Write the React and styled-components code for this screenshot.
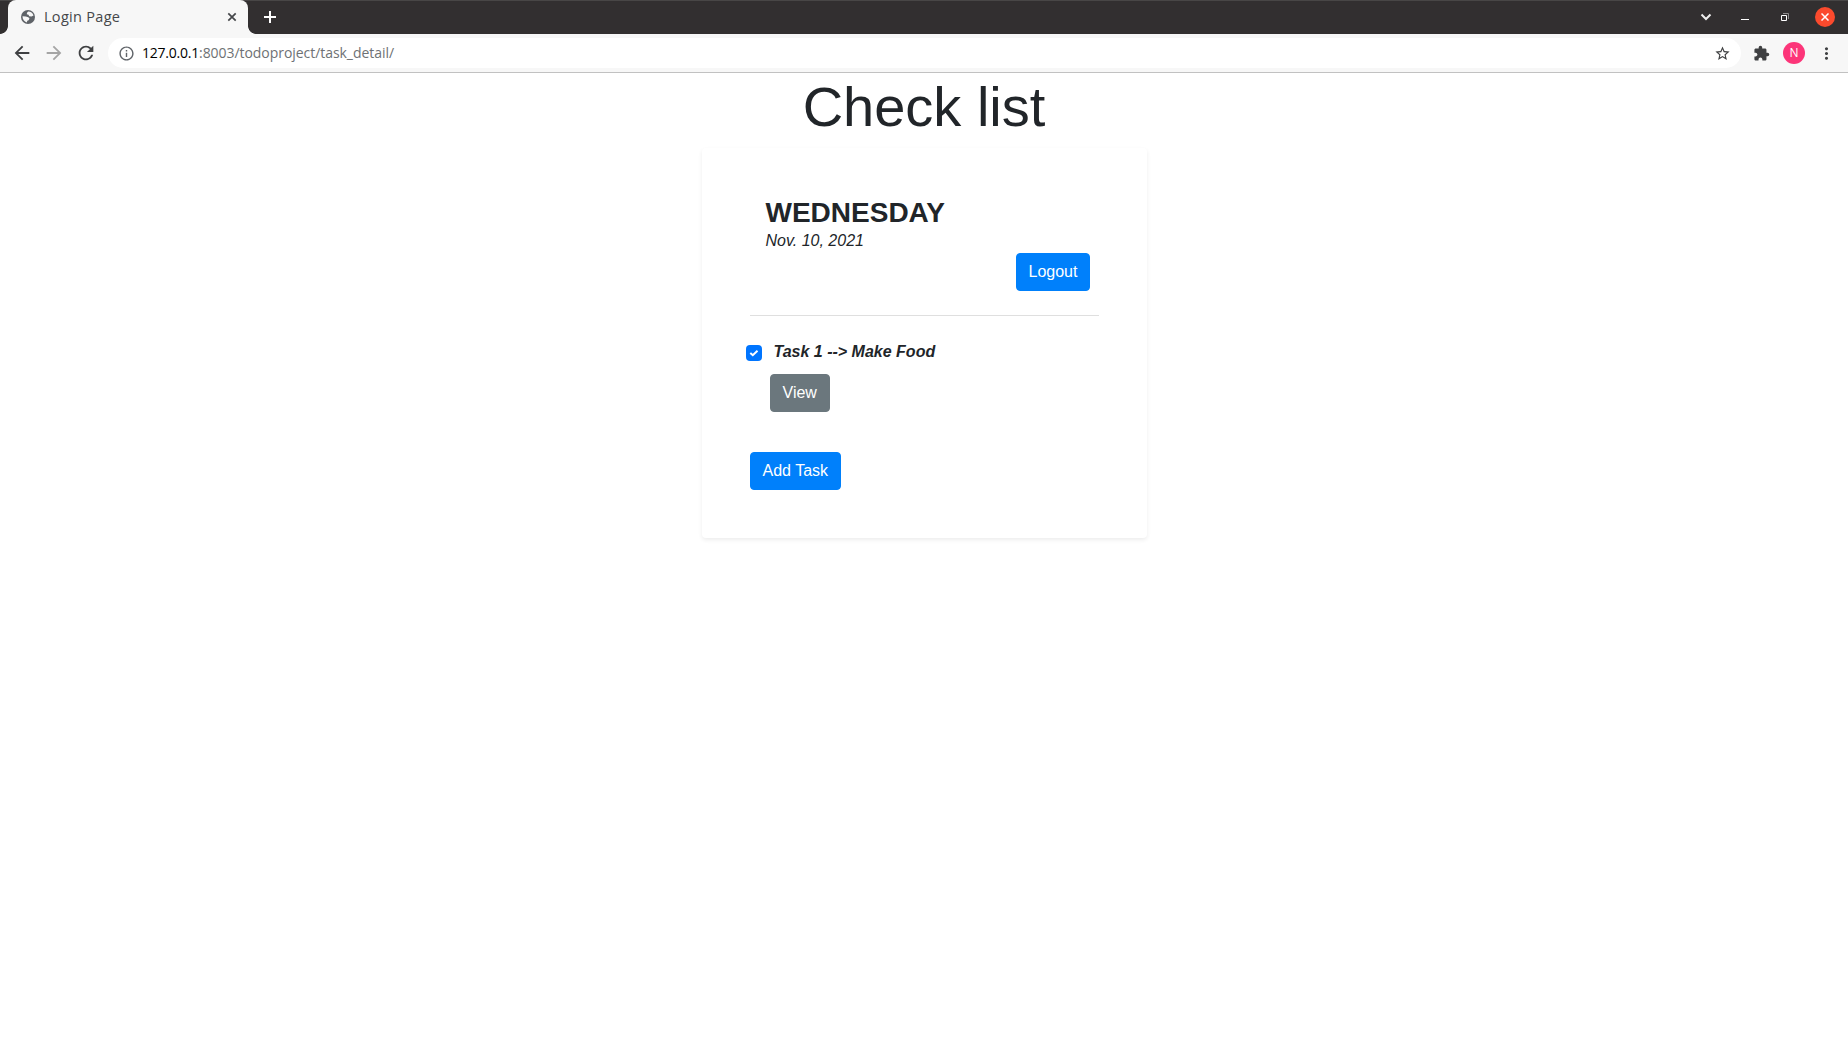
import React from "react";
import styled, { createGlobalStyle, css } from "styled-components";
import {
  MdArrowBack,
  MdArrowForward,
  MdRefresh,
  MdInfoOutline,
  MdStarBorder,
  MdExtension,
  MdMoreVert,
} from "react-icons/md";

const GlobalStyle = createGlobalStyle`
  *, *::before, *::after { box-sizing: border-box; }
  body {
    margin: 0;
    background: #fff;
    color: #212529;
    font: 16px/24px "Liberation Sans", Arial, sans-serif;
  }
  svg { display: block; flex: none; }
`;

const Window = styled.div`
  display: flex;
  flex-direction: column;
  height: 100vh;
  overflow: hidden;
`;

const uiFont = css`
  font-family: "Open Sans", "Noto Sans", sans-serif;
  white-space: nowrap;
`;

const TabStrip = styled.div`
  display: flex;
  height: 34px;
  padding-left: 8px;
  background: #322f30;
  box-shadow: inset 0 1px #484646;
`;

const Tab = styled.div`
  ${uiFont}
  position: relative;
  display: flex;
  align-items: center;
  width: 240px;
  padding: 0 8px 0 13px;
  border-radius: 8px 8px 0 0;
  background: #f7f7f7;
  color: #45474a;
  &::before,
  &::after {
    content: "";
    position: absolute;
    bottom: 0;
    width: 8px;
    height: 8px;
  }
  &::before {
    left: -8px;
    background: radial-gradient(circle at 0 0, transparent 7.5px, #f7f7f7 8.2px);
  }
  &::after {
    right: -8px;
    background: radial-gradient(circle at 100% 0, transparent 7.5px, #f7f7f7 8.2px);
  }
`;

const TabTitle = styled.span`
  flex: 1;
  margin-left: 9px;
  font-size: 14.5px;
  line-height: 20px;
  letter-spacing: 0.3px;
`;

const NewTab = styled.div`
  display: flex;
  align-items: center;
  margin-left: 16px;
`;

const WindowButtons = styled.div`
  display: flex;
  align-items: center;
  margin-left: auto;
  padding-right: 13px;
`;

const WindowButton = styled.div`
  display: grid;
  place-items: center;
  width: ${(p) => p.$w}px;
  height: 20px;
`;

const Close = styled.div`
  display: grid;
  place-items: center;
  width: 20px;
  height: 20px;
  margin-left: 10px;
  border-radius: 50%;
  background: #fb4a2d;
`;

const Toolbar = styled.div`
  display: flex;
  align-items: center;
  height: 39px;
  border-bottom: 1px solid #c1c1c1;
  padding: 0 10px 0 6px;
  background: #f7f7f7;
`;

const ToolButton = styled.div`
  display: grid;
  place-items: center;
  width: ${(p) => p.$w || 32}px;
  height: 30px;
  color: ${(p) => (p.$muted ? "#a5a5a5" : "#3f4042")};
`;

const AddressBar = styled.div`
  ${uiFont}
  display: flex;
  align-items: center;
  flex: 1;
  height: 30px;
  margin: 0 5px 0 6px;
  padding: 0 10px 0 9.5px;
  border-radius: 15px;
  background: #fff;
  color: #5f6368;
`;

const Url = styled.span`
  flex: 1;
  margin-left: 7.5px;
  font-size: 14px;
  line-height: 20px;
  letter-spacing: -0.05px;
  color: #6e7174;
`;

const Host = styled.span`
  color: #000;
  letter-spacing: -0.23px;
`;

const Avatar = styled.div`
  ${uiFont}
  display: grid;
  place-items: center;
  width: 22px;
  height: 22px;
  margin: 0 10px 0 6px;
  border-radius: 50%;
  background: #fc3579;
  color: #fff;
  font-size: 12px;
  line-height: 22px;
`;

const Page = styled.main`
  display: flex;
  flex-direction: column;
  align-items: center;
  flex: 1;
`;

const Title = styled.h1`
  margin: 0 0 8px;
  font-size: 56px;
  font-weight: 300;
  line-height: 67px;
`;

const Card = styled.section`
  width: 445px;
  height: 390px;
  padding: 48px;
  border-radius: 4px;
  background: #fff;
  box-shadow: 0 2px 4px rgba(0, 0, 0, 0.075);
`;

const CardHeader = styled.header`
  display: flex;
  flex-direction: column;
  padding: 0 9px 0 16px;
`;

const Day = styled.h3`
  margin: 0;
  font-size: 28px;
  font-weight: 700;
  line-height: 33px;
`;

const DateText = styled.em`
  line-height: 24px;
`;

const Button = styled.button`
  align-self: ${(p) => p.$align || "flex-start"};
  width: ${(p) => p.$w}px;
  height: 38px;
  padding: 6px 0 6px 12px;
  border: 1px solid ${(p) => p.$color};
  border-radius: 4px;
  background: ${(p) => p.$color};
  color: #fff;
  font: inherit;
  text-align: left;
  white-space: nowrap;
`;

const Rule = styled.hr`
  height: 1px;
  margin: 24px 0;
  border: 0;
  background: #dfdfdf;
`;

const Task = styled.div`
  display: flex;
  align-items: flex-start;
  margin-left: -4px;
`;

const CheckBox = styled.span`
  display: grid;
  place-items: center;
  width: 16px;
  height: 16px;
  margin: 5px 12px 0 0;
  border-radius: 4px;
  background: #0075ff;
`;

const TaskName = styled.strong`
  font-style: italic;
`;

const Actions = styled.div`
  display: flex;
  padding: ${(p) => p.$pad};
`;

export default function App() {
  return (
    <>
      <GlobalStyle />
      <Window>
        <TabStrip>
          <Tab>
            <svg width="14" height="14" viewBox="0 0 14 14">
              <circle cx="7" cy="7" r="7" fill="#5f6368" />
              <path
                d="M7.2 1.6c2.500 0 4.600 1.500 5.300 3.900L10.500 6.500 8.200 6.200 7.500 4.800 5.800 4.300 6 2.800zM1.500 6.300L4.800 6.500 7.300 7.300 8.500 8.600 7.600 10.200 6.300 10.700 5.800 12.400C3.300 11.800 1.500 9.600 1.500 6.300z"
                fill="#f7f7f7"
              />
            </svg>
            <TabTitle>Login Page</TabTitle>
            <svg width="16" height="16" viewBox="0 0 16 16" stroke="#45474a" strokeWidth="1.7">
              <path d="M4.300 4.300l7.400 7.400M11.700 4.300l-7.400 7.400" />
            </svg>
          </Tab>
          <NewTab>
            <svg width="12" height="12" viewBox="0 0 12 12" stroke="#fff" strokeWidth="2">
              <path d="M6 0v12M0 6h12" />
            </svg>
          </NewTab>
          <WindowButtons>
            <WindowButton $w={38}>
              <svg width="12" height="8" viewBox="0 0 12 8" fill="none" stroke="#eee" strokeWidth="2">
                <path d="M1.5 1.5L6 6l4.5-4.5" />
              </svg>
            </WindowButton>
            <WindowButton $w={40}>
              <svg width="8" height="8" viewBox="0 0 8 8" fill="#fff">
                <path d="M0 6h8v1H0z" />
              </svg>
            </WindowButton>
            <WindowButton $w={40}>
              <svg width="8" height="8" viewBox="0 0 8 8" fill="none">
                <path d="M2 .5h5.5V6" stroke="#8d8b8c" />
                <path d="M.5 2.5h5v5h-5z" stroke="#fff" />
              </svg>
            </WindowButton>
            <Close>
              <svg width="8" height="8" viewBox="0 0 8 8" stroke="#fff" strokeWidth="1.5">
                <path d="M.5.5l7 7M7.5.5l-7 7" />
              </svg>
            </Close>
          </WindowButtons>
        </TabStrip>
        <Toolbar>
          <ToolButton><MdArrowBack size={22} /></ToolButton>
          <ToolButton $muted><MdArrowForward size={22} /></ToolButton>
          <ToolButton><MdRefresh size={22} /></ToolButton>
          <AddressBar>
            <MdInfoOutline size={17} />
            <Url><Host>127.0.0.1</Host>:8003/todoproject/task_detail/</Url>
            <MdStarBorder size={17} color="#3f4042" />
          </AddressBar>
          <ToolButton $w={31}><MdExtension size={17} /></ToolButton>
          <Avatar>N</Avatar>
          <ToolButton $w={23}><MdMoreVert size={19} /></ToolButton>
        </Toolbar>
        <Page>
          <Title>Check list</Title>
          <Card>
            <CardHeader>
              <Day>WEDNESDAY</Day>
              <DateText>Nov. 10, 2021</DateText>
              <Button $color="#0080fb" $w={74} $align="flex-end">Logout</Button>
            </CardHeader>
            <Rule />
            <Task>
              <CheckBox>
                <svg width="10" height="10" viewBox="0 0 10 10" fill="none" stroke="#fff" strokeWidth="2">
                  <path d="M1.300 5L3.800 7.200 8.500 2.800" />
                </svg>
              </CheckBox>
              <TaskName>Task 1 --&gt; Make Food</TaskName>
            </Task>
            <Actions $pad="10px 20px 40px">
              <Button $color="#6b777d" $w={60}>View</Button>
            </Actions>
            <Actions $pad="0">
              <Button $color="#0080fb" $w={91}>Add Task</Button>
            </Actions>
          </Card>
        </Page>
      </Window>
    </>
  );
}
